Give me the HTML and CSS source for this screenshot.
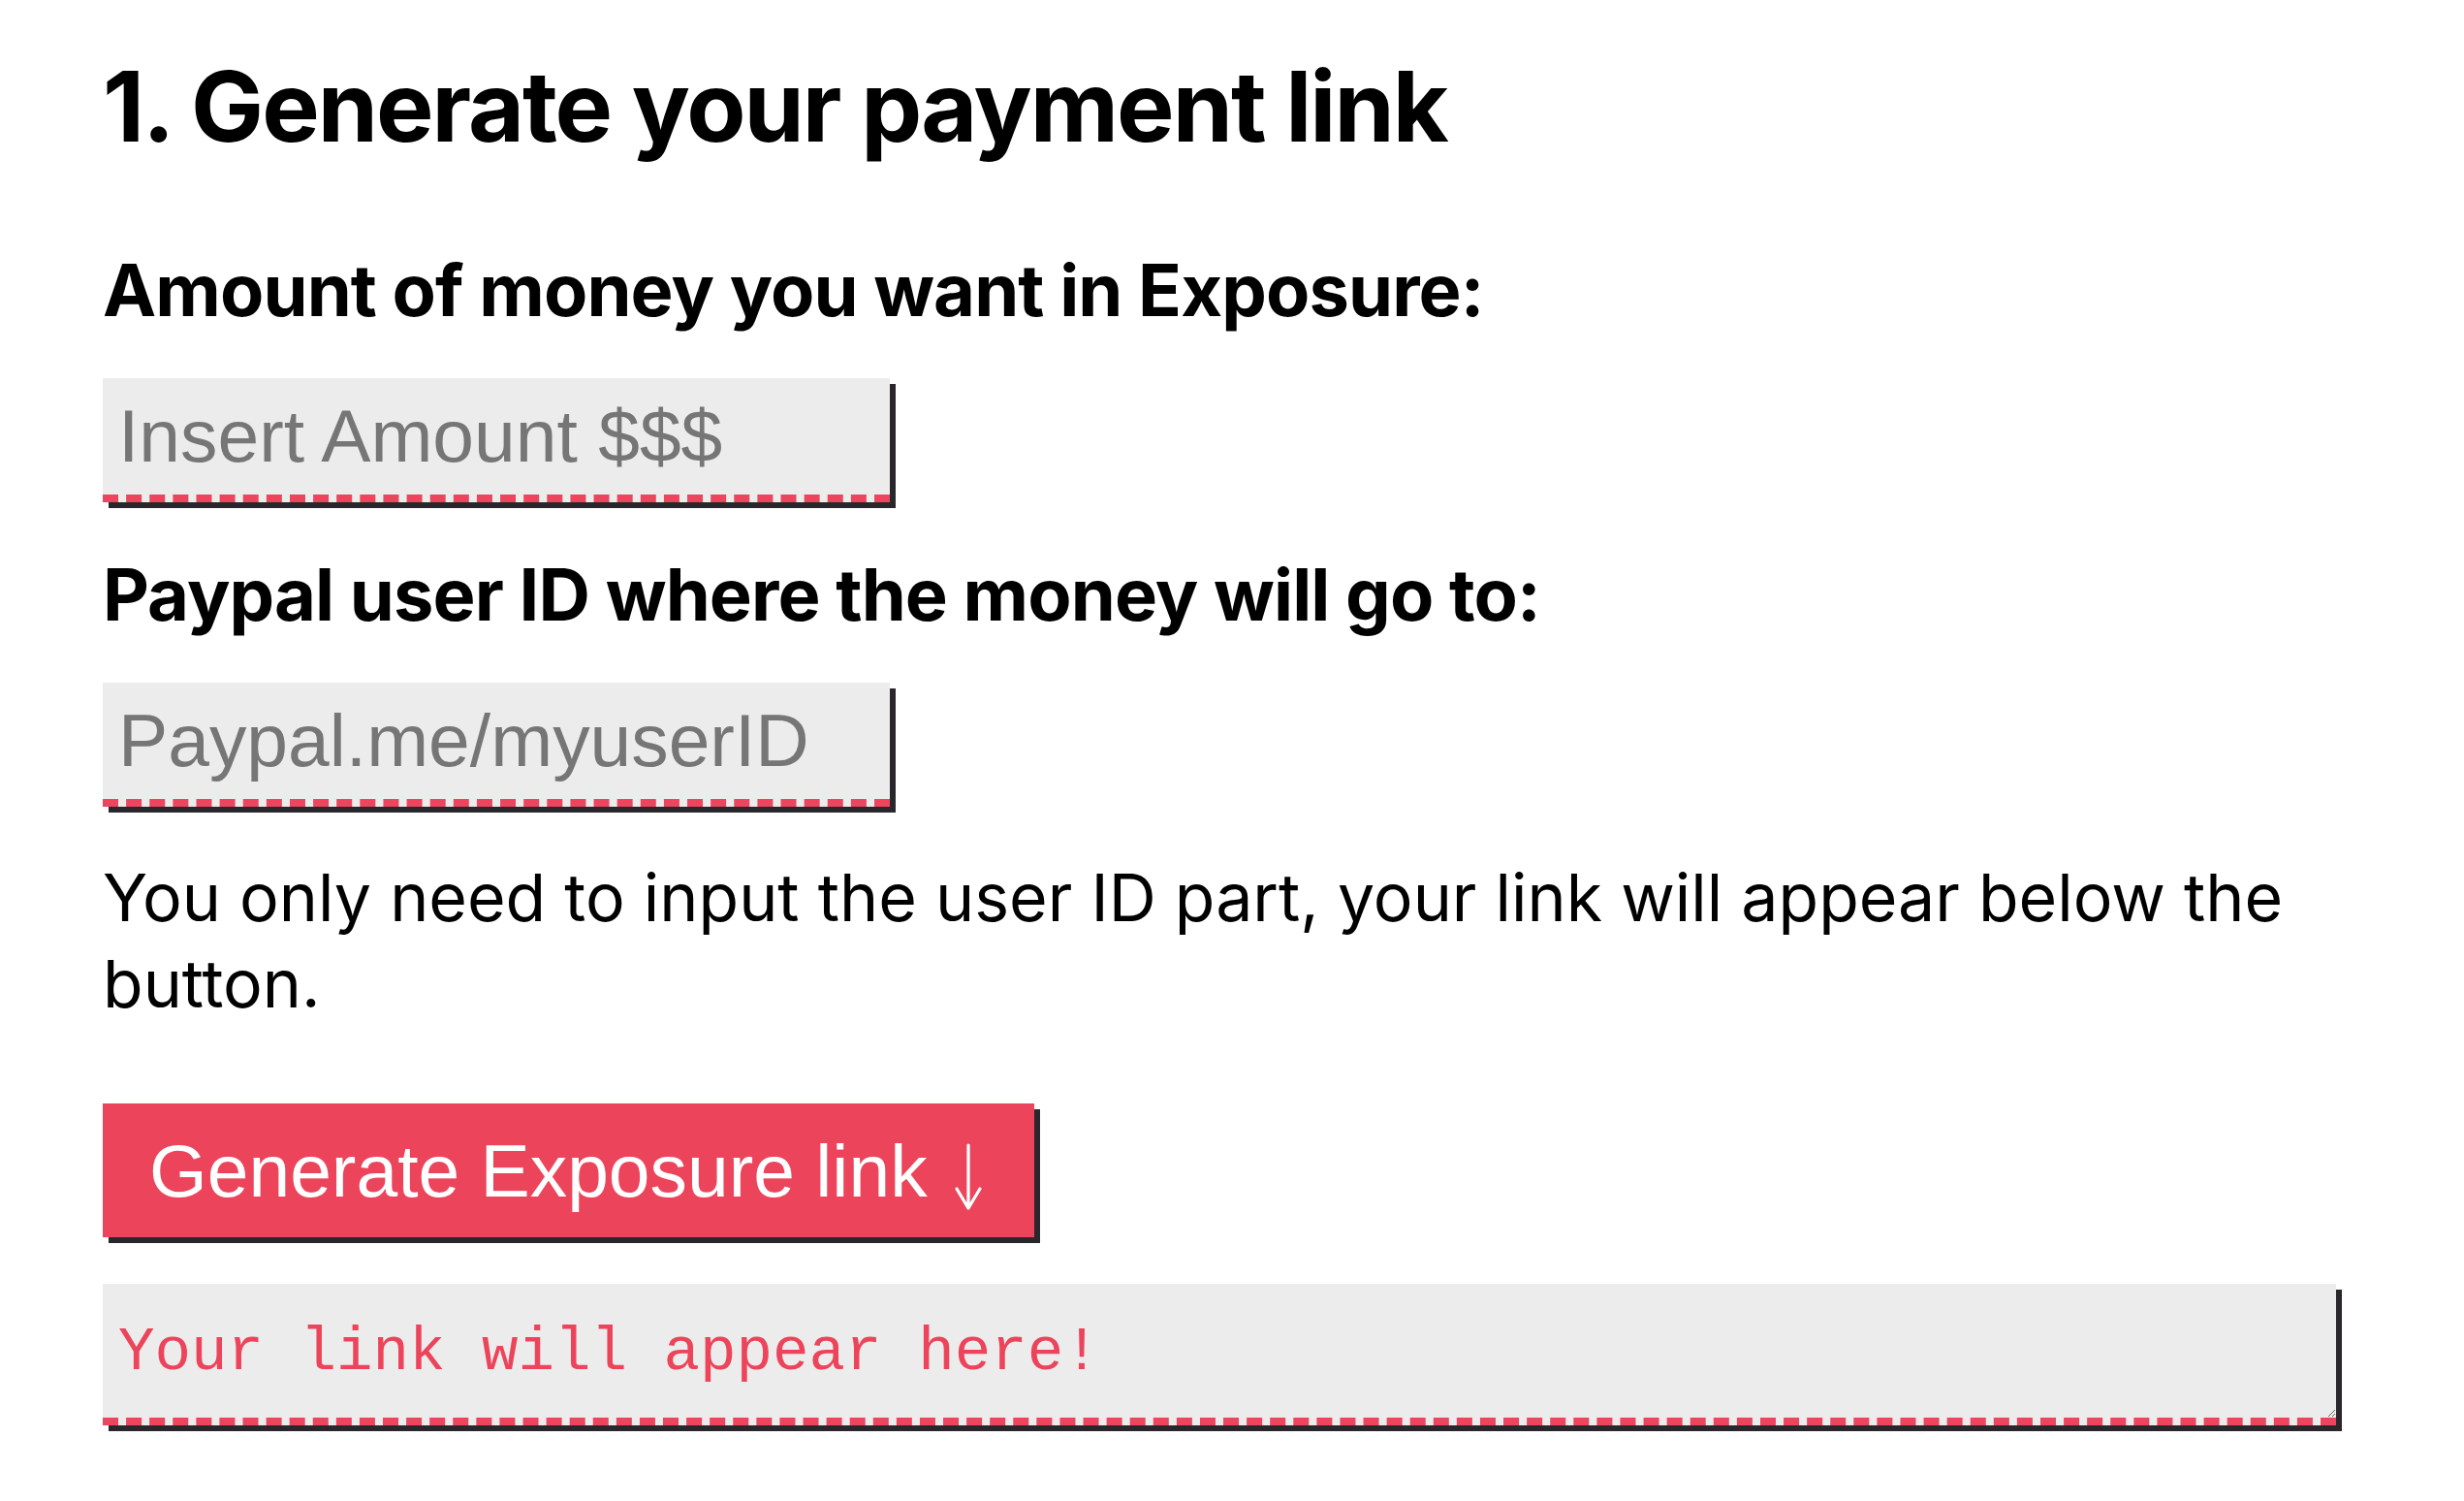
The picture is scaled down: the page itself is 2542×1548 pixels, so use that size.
FILE: index.html
```html
<!DOCTYPE html>
<html lang="en">
<head>
<meta charset="utf-8">
<title>Generate your payment link</title>
<link rel="stylesheet" href="styles.css">
</head>
<body>
<main class="page">
  <h1 class="title">1. Generate your payment link</h1>
  <label class="field-label" for="amount">Amount of money you want in Exposure:</label>
  <input class="field" id="amount" type="text" placeholder="Insert Amount $$$">
  <label class="field-label field-label--second" for="userid">Paypal user ID where the money will go to:</label>
  <input class="field" id="userid" type="text" placeholder="Paypal.me/myuserID">
  <p class="hint">You only need to input the user ID part, your link will appear below the button.</p>
  <button class="generate" type="button">Generate Exposure link<svg class="arrow" viewBox="0 0 30 70" aria-hidden="true"><path d="M15 2 V67 M3 47 L15 67 L27 47" /></svg></button>
  <textarea class="result" readonly>Your link will appear here!</textarea>
</main>
</body>
</html>
```

FILE: styles.css
```css
html, body {
  margin: 0;
  padding: 0;
  background: #ffffff;
}

.page {
  padding: 50px 0 60px 106px;
  width: 2304px;
  display: flex;
  flex-direction: column;
  align-items: flex-start;
  font-family: "Inter", "Liberation Sans", sans-serif;
  color: #000000;
}

.title {
  margin: 0;
  font-family: "Inter", sans-serif;
  font-weight: 700;
  font-size: 100px;
  line-height: 120px;
  letter-spacing: -2px;
}

.field-label {
  display: block;
  margin-top: 85px;
  font-weight: 700;
  font-size: 74px;
  line-height: 88.8px;
  letter-spacing: -0.9px;
}

.field-label--second {
  margin-top: 51px;
}

.field {
  box-sizing: border-box;
  margin-top: 46px;
  width: 812px;
  height: 128px;
  padding: 0 16px;
  border: none;
  border-bottom: 8px dashed #ed455d;
  background: #ececec;
  box-shadow: 6px 6px 0 #29272c;
  font-family: "Liberation Sans", Arial, sans-serif;
  font-size: 76.8px;
  color: #333333;
  outline: none;
}

.field::placeholder {
  color: #767676;
  opacity: 1;
}

.hint {
  margin: 49px 0 0;
  font-size: 68px;
  line-height: 89.6px;
  font-weight: 400;
}

.generate {
  display: flex;
  align-items: flex-start;
  margin-top: 78px;
  padding: 25px 53px 25px 48px;
  border: none;
  background: #ec455b;
  color: #ffffff;
  box-shadow: 6px 6px 0 #29272c;
  font-family: "Liberation Sans", Arial, sans-serif;
  font-size: 76.8px;
  line-height: 88px;
  cursor: pointer;
}

.arrow {
  width: 30px;
  height: 70px;
  margin: 16px 0 0 27px;
  fill: none;
  stroke: #ffffff;
  stroke-width: 3.2;
  stroke-linecap: round;
  stroke-linejoin: round;
}

.result {
  box-sizing: border-box;
  margin-top: 48px;
  width: 2304px;
  height: 146px;
  padding: 36px 16px 0;
  border: none;
  border-bottom: 8px dashed #ed455d;
  background: #ececec;
  box-shadow: 6px 6px 0 #29272c;
  font-family: "Liberation Mono", "Courier New", monospace;
  font-size: 62.5px;
  line-height: 72px;
  color: #ec455b;
  outline: none;
}
```
